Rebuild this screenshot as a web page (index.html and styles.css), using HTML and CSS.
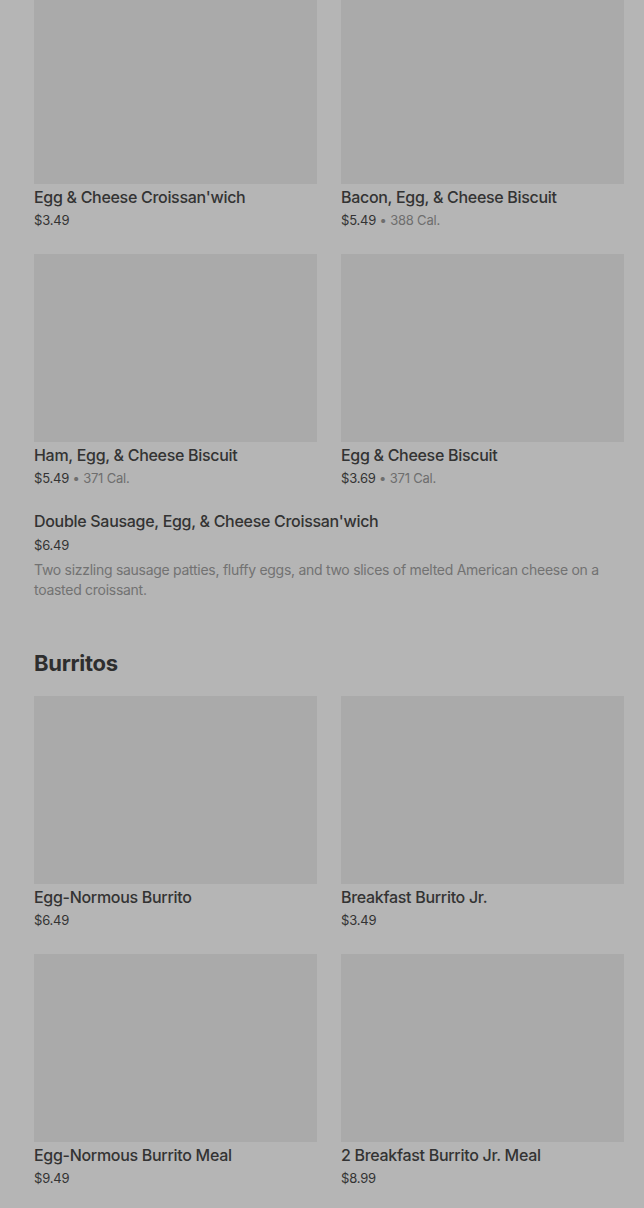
FILE: index.html
```html
<!DOCTYPE html>
<html lang="en">
<head>
    <meta charset="UTF-8">
    <meta name="viewport" content="width=device-width, initial-scale=1.0">
    <title>Breakfast Menu</title>
    <link rel="stylesheet" href="styles.css">
</head>
<body>
    <div class="menu">
        <div class="item-grid">
            <div class="item">
                <div class="photo"></div>
                <h3>Egg &amp; Cheese Croissan'wich</h3>
                <p class="price">$3.49</p>
            </div>
            <div class="item">
                <div class="photo"></div>
                <h3>Bacon, Egg, &amp; Cheese Biscuit</h3>
                <p class="price">$5.49 <span class="cal">• 388 Cal.</span></p>
            </div>
            <div class="item">
                <div class="photo"></div>
                <h3>Ham, Egg, &amp; Cheese Biscuit</h3>
                <p class="price">$5.49 <span class="cal">• 371 Cal.</span></p>
            </div>
            <div class="item">
                <div class="photo"></div>
                <h3>Egg &amp; Cheese Biscuit</h3>
                <p class="price">$3.69 <span class="cal">• 371 Cal.</span></p>
            </div>
        </div>

        <div class="item-wide">
            <h3>Double Sausage, Egg, &amp; Cheese Croissan'wich</h3>
            <p class="price">$6.49</p>
            <p class="desc">Two sizzling sausage patties, fluffy eggs, and two slices of melted American cheese on a toasted croissant.</p>
        </div>

        <h2 class="section-title">Burritos</h2>
        <div class="item-grid">
            <div class="item">
                <div class="photo"></div>
                <h3>Egg-Normous Burrito</h3>
                <p class="price">$6.49</p>
            </div>
            <div class="item">
                <div class="photo"></div>
                <h3>Breakfast Burrito Jr.</h3>
                <p class="price">$3.49</p>
            </div>
            <div class="item">
                <div class="photo"></div>
                <h3>Egg-Normous Burrito Meal</h3>
                <p class="price">$9.49</p>
            </div>
            <div class="item">
                <div class="photo"></div>
                <h3>2 Breakfast Burrito Jr. Meal</h3>
                <p class="price">$8.99</p>
            </div>
        </div>
    </div>
</body>
</html>
```
FILE: styles.css
```css
body {
    font-family: 'Inter', 'Roboto', sans-serif;
    background: #b5b5b5;
    color: #333333;
    margin: 0;
    padding: 0;
    overflow: hidden;
}
.menu {
    padding: 0 20px 0 34px;
    margin-top: -4px;
}
.item-grid {
    display: grid;
    grid-template-columns: 1fr 1fr;
    column-gap: 24px;
    row-gap: 24px;
}
.photo {
    height: 188px;
    background: #aaaaaa;
}
h3 {
    font-size: 16px;
    font-weight: 500;
    line-height: 24px;
    letter-spacing: -0.3px;
    margin: 1px 0 0;
    color: #333333;
}
.price {
    font-size: 13px;
    line-height: 20px;
    letter-spacing: -0.2px;
    margin: 1px 0 0;
    color: #333333;
}
.cal {
    color: #6e6e6e;
}
.item-wide {
    margin-top: 21px;
}
.item-wide .price {
    margin-top: 2px;
}
.desc {
    font-size: 14px;
    line-height: 20px;
    letter-spacing: -0.28px;
    margin: 5px 0 0;
    color: #727272;
}
.section-title {
    font-size: 22px;
    font-weight: 700;
    line-height: 32px;
    letter-spacing: -0.3px;
    margin: 47px 0 17px;
    color: #2e2e2e;
}
```
